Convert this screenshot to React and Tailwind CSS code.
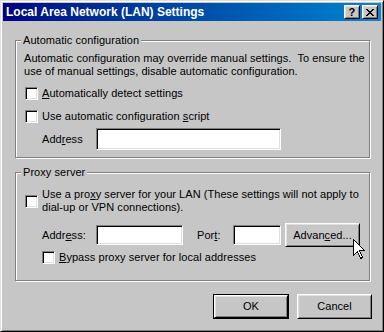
import React from 'react';

// Win98-style bevels
const RAISED =
  'border border-t-white border-l-white border-b-black border-r-black shadow-[inset_1px_1px_0_#dfdfdf,inset_-1px_-1px_0_#808080]';
const SUNKEN =
  'border border-t-[#808080] border-l-[#808080] border-b-white border-r-white shadow-[inset_1px_1px_0_#000,inset_-1px_-1px_0_#dfdfdf]';

function Field({ className }) {
  return <div className={`bg-white ${SUNKEN} ${className}`} />;
}

function Check({ className = '' }) {
  return <div className={`w-[13px] h-[13px] shrink-0 bg-white ${SUNKEN} ${className}`} />;
}

function Btn({ children, className = '' }) {
  return (
    <div className={`flex items-center justify-center bg-[#c6c6c6] ${RAISED} ${className}`}>
      {children}
    </div>
  );
}

function Group({ label, className = '', children }) {
  return (
    <div
      className={`relative w-[355px] border border-[#808080] shadow-[inset_1px_1px_0_#fff,1px_1px_0_#fff] ${className}`}
    >
      <span className="absolute -top-[7px] left-[5px] px-[2px] bg-[#c6c6c6] leading-[13px]">{label}</span>
      {children}
    </div>
  );
}

function Cursor() {
  return (
    <svg className="absolute left-[352px] top-[238px]" width="13" height="21" viewBox="0 0 13 21">
      <path
        d="M0.5 0.5 L0.5 16.5 L4.5 12.5 L7.5 19.5 L9.5 18.5 L6.5 11.5 L11.5 11.5 Z"
        fill="#fff"
        stroke="#000"
        strokeWidth="1"
        shapeRendering="crispEdges"
      />
    </svg>
  );
}

export default function App() {
  return (
    <div className="relative w-[384px] h-[332px] bg-[#c6c6c6] border border-t-[#dfdfdf] border-l-[#dfdfdf] border-r-black border-b-black shadow-[inset_1px_1px_0_#fff,inset_-1px_-1px_0_#808080] p-[2px] flex flex-col font-['Liberation_Sans',Arial,sans-serif] text-[11px] leading-[13px] tracking-[0.05px] text-black">
      {/* title bar */}
      <div className="h-[18px] shrink-0 flex items-center bg-linear-to-r from-[#000080] to-[#1084d0] pl-[3px] pr-[3px]">
        <span className="flex-1 text-white font-bold text-[12px] tracking-normal">Local Area Network (LAN) Settings</span>
        <Btn className="w-[16px] h-[14px] font-bold text-[11px] leading-none">?</Btn>
        <Btn className="w-[16px] h-[14px] ml-[2px]">
          <svg width="8" height="7" viewBox="0 0 8 7" shapeRendering="crispEdges">
            <path d="M0 0h2v1h-2zM6 0h2v1h-2zM1 1h2v1h-2zM5 1h2v1h-2zM2 2h4v1h-4zM3 3h2v1h-2zM2 4h4v1h-4zM1 5h2v1h-2zM5 5h2v1h-2zM0 6h2v1h-2zM6 6h2v1h-2z" fill="#000" />
          </svg>
        </Btn>
      </div>

      <div className="flex flex-col pl-[12px] pt-[19px]">
        <Group label="Automatic configuration" className="h-[118px] pl-[8px] pt-[11px]">
          <p>
            Automatic configuration may override manual settings.{'\u00a0'} To ensure the
            <br />
            use of manual settings, disable automatic configuration.
          </p>
          <div className="flex items-center gap-[4px] mt-[9px] ml-[1px]">
            <Check />
            <span>
              <u>A</u>utomatically detect settings
            </span>
          </div>
          <div className="flex items-center gap-[4px] mt-[10px] ml-[1px]">
            <Check />
            <span>
              Use automatic configuration <u>s</u>cript
            </span>
          </div>
          <div className="flex items-center mt-[5px] ml-[18px]">
            <span className="w-[54px]">
              Add<u>r</u>ess
            </span>
            <Field className="w-[185px] h-[22px]" />
          </div>
        </Group>

        <Group label="Proxy server" className="h-[109px] mt-[14px] pl-[8px] pt-[15px]">
          <div className="flex items-center gap-[4px] ml-[1px]">
            <Check />
            <span>
              Use a pro<u>x</u>y server for your LAN (These settings will not apply to
              <br />
              dial-up or VPN connections).
            </span>
          </div>
          <div className="flex items-center mt-[9px] ml-[18px]">
            <span className="w-[54px]">
              Addr<u>e</u>ss:
            </span>
            <Field className="w-[87px] h-[20px]" />
            <span className="w-[36px] ml-[14px]">
              Por<u>t</u>:
            </span>
            <Field className="w-[48px] h-[20px]" />
            <Btn className="w-[75px] h-[24px] ml-[4px]">
              <span>
                Advan<u>c</u>ed...
              </span>
            </Btn>
          </div>
          <div className="flex items-center gap-[4px] mt-[4px] ml-[18px]">
            <Check />
            <span>
              <u>B</u>ypass proxy server for local addresses
            </span>
          </div>
        </Group>

        <div className="flex justify-end gap-[8px] mt-[13px] pr-[9px]">
          <div className="border border-black">
            <Btn className="w-[74px] h-[23px]">OK</Btn>
          </div>
          <Btn className="w-[75px] h-[25px]">Cancel</Btn>
        </div>
      </div>

      <Cursor />
    </div>
  );
}
